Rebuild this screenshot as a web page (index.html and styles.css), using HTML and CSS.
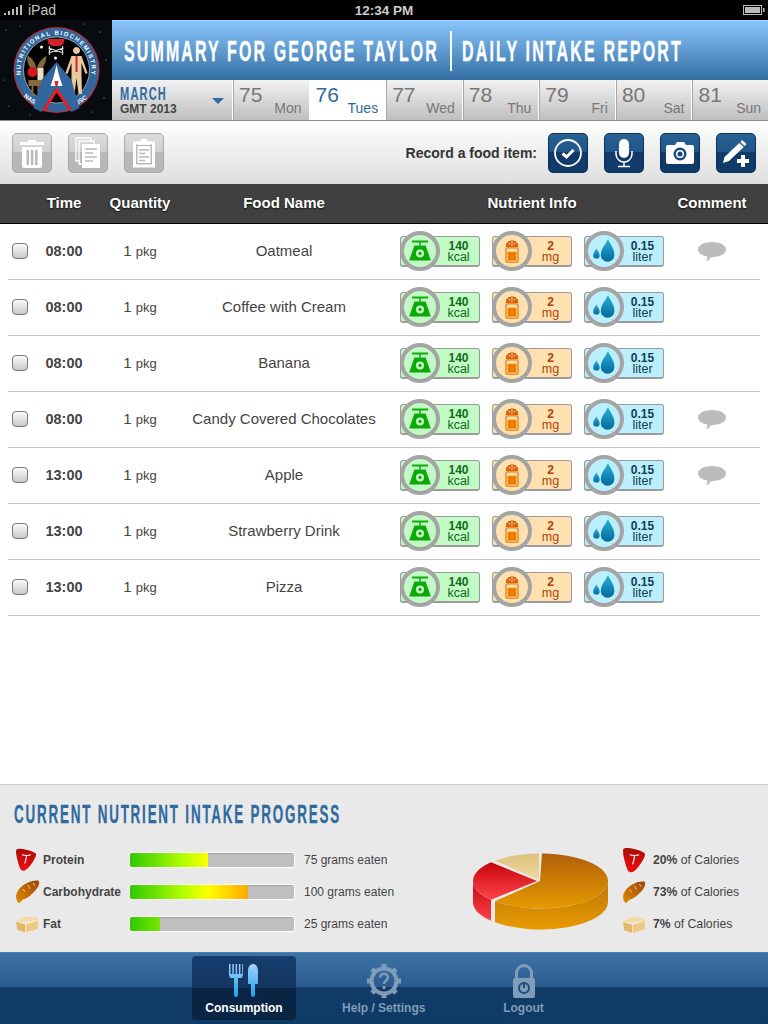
FILE: index.html
```html
<!DOCTYPE html>
<html lang="en">
<head>
<meta charset="utf-8">
<title>Daily Intake Report</title>
<link rel="stylesheet" href="styles.css">
</head>
<body>
<svg class="defs" width="0" height="0" aria-hidden="true">
  <defs>
    <linearGradient id="gMeat" x1="0" y1="0" x2="0" y2="1"><stop offset="0" stop-color="#a80c05"/><stop offset="1" stop-color="#f50a12"/></linearGradient>
    <linearGradient id="gBread" x1="1" y1="0" x2="0" y2="1"><stop offset="0" stop-color="#9b4707"/><stop offset="1" stop-color="#e08a05"/></linearGradient>
    <linearGradient id="gDrop" x1="0" y1="0" x2="0" y2="1"><stop offset="0" stop-color="#2bb0dc"/><stop offset="1" stop-color="#04699c"/></linearGradient>
    <linearGradient id="gPieO" x1="0" y1="0" x2="0" y2="1"><stop offset="0" stop-color="#b05f0a"/><stop offset="1" stop-color="#e69a00"/></linearGradient>
    <linearGradient id="gPieOS" x1="0" y1="0" x2="0" y2="1"><stop offset="0" stop-color="#bf7408"/><stop offset="1" stop-color="#e79c00"/></linearGradient>
    <linearGradient id="gPieR" x1="0" y1="0" x2="0" y2="1"><stop offset="0" stop-color="#c9040c"/><stop offset="1" stop-color="#fb444a"/></linearGradient>
    <linearGradient id="gPieC" x1="0" y1="0" x2="0" y2="1"><stop offset="0" stop-color="#e0c07c"/><stop offset="1" stop-color="#efd9a2"/></linearGradient>
    <linearGradient id="gKnife" x1="0" y1="0" x2="0" y2="1"><stop offset="0" stop-color="#a6d2fb"/><stop offset="1" stop-color="#18a3ea"/></linearGradient>

    <symbol id="i-scale" viewBox="0 0 40 40">
      <path fill="#0aa90a" d="M10 7h20v2.500h-9v3.500h-2V9.500h-9z"/>
      <path fill="#0aa90a" d="M13 13h14l6.500 19H6.500z"/>
      <circle cx="20" cy="23" r="5" fill="#c6f9c6"/><circle cx="20" cy="23" r="2" fill="#0aa90a"/>
    </symbol>
    <symbol id="i-salt" viewBox="0 0 40 40">
      <path fill="#d8650a" d="M12 15c0-6 4-8 8-8s8 2 8 8z"/>
      <g fill="#ffdca6"><circle cx="17" cy="11" r="1"/><circle cx="20" cy="9.500" r="1"/><circle cx="23" cy="11" r="1"/><circle cx="20" cy="12.500" r="1"/></g>
      <rect x="12.500" y="16" width="15" height="18" rx="1.500" fill="none" stroke="#e9780a" stroke-width="1.600"/>
      <rect x="14.500" y="21" width="11" height="11" fill="#ea7d02"/>
    </symbol>
    <symbol id="i-drops" viewBox="0 0 40 40">
      <path fill="url(#gDrop)" d="M25 5c3 7 8 12 8 20a8.500 8.500 0 0 1-17 0c0-8 6-13 9-20z"/>
      <path fill="url(#gDrop)" d="M10.500 17c1.500 3 4 5 4 8.500a4 4 0 0 1-8 0c0-3.500 2.500-5.500 4-8.500z"/>
    </symbol>
    <symbol id="i-bubble" viewBox="0 0 28 20">
      <path fill="#bbb" d="M14 0c7.700 0 14 3.100 14 7.500S21.700 15 14 15h-.5L8.500 20l.8-5.500C3.800 13.600 0 10.800 0 7.500 0 3.100 6.300 0 14 0z"/>
    </symbol>
    <symbol id="i-meat" viewBox="0 0 24 26">
      <path fill="url(#gMeat)" d="M3 0c6 0 14 2 19 5 1.500 1 1 3 0 5-3 6-7 12-12 15-3 1-5-1-6-4C2 15 0 8 0 3c0-2 1-3 3-3z"/>
      <path fill="none" stroke="#fff" stroke-width="1.200" d="M7 7c3 1 7 1 10 0M12 8c0 3-1 6-2 9"/>
    </symbol>
    <symbol id="i-bread" viewBox="0 0 24 24">
      <path fill="url(#gBread)" d="M23 1c1 4-2 8-6 12-4 4-8 6-11 7-1 1-2 3-3 3-2-1-3-4-3-7C1 10 6 5 11 3c4-2 9-3 12-2z"/>
      <path fill="none" stroke="#f5c98a" stroke-width="1" d="M17 3l2 3M12 5l2 4M7 9l2 3"/>
    </symbol>
    <symbol id="i-butter" viewBox="0 0 24 18">
      <path fill="#f2dba5" d="M0 6l8-5 15 1 0 3-14 2z"/>
      <path fill="#e2b768" d="M0 6l10 3v9L1 15z"/>
      <path fill="#edc985" d="M10 9l13-4v9l-13 4z"/>
      <path fill="none" stroke="#fff3d4" stroke-width=".7" d="M0 6l10 3 13-4M10 9v9"/>
    </symbol>
  </defs>
</svg>

<div class="status">
  <div class="status-left">
    <svg class="signal" width="20" height="11" viewBox="0 0 20 11"><path fill="#bbb" d="M1 8h2v2H1zM5 6h2v4H5zM9 4h2v6H9zM13 2h2v8h-2zM17 0h2v10h-2z"/></svg>
    <span>iPad</span>
  </div>
  <div class="status-time">12:34 PM</div>
  <svg class="battery" width="22" height="10" viewBox="0 0 22 10"><rect x=".5" y=".5" width="18" height="9" fill="none" stroke="#bbb"/><rect x="2" y="2" width="15" height="6" fill="#bbb"/><rect x="20" y="3" width="1.500" height="4" fill="#bbb"/></svg>
</div>

<header class="header">
  <svg class="logo" width="112" height="100" viewBox="0 0 112 100">
    <defs><path id="ringTop" d="M21.300 52.900A35.500 35.500 0 1 1 91.700 52.900"/></defs>
    <rect width="112" height="100" fill="#080c10"/>
    <g fill="#9aa"><circle cx="6" cy="10" r=".6"/><circle cx="20" cy="6" r=".5"/><circle cx="100" cy="12" r=".6"/><circle cx="106" cy="40" r=".6"/><circle cx="4" cy="60" r=".5"/><circle cx="9" cy="86" r=".6"/><circle cx="104" cy="78" r=".6"/><circle cx="92" cy="92" r=".5"/><circle cx="30" cy="95" r=".5"/><circle cx="84" cy="4" r=".5"/></g>
    <g transform="translate(-.5 2)">
      <circle cx="57" cy="48" r="43" fill="#c8262c"/>
      <circle cx="57" cy="48" r="42" fill="#31679d"/>
      <circle cx="57" cy="48" r="33" fill="#020203" stroke="#ddd" stroke-width=".6"/>
      <text class="logo-ring" textLength="120" lengthAdjust="spacing"><textPath href="#ringTop">NUTRITIONAL BIOCHEMISTRY</textPath></text>
      <text class="logo-ring logo-mid" transform="rotate(35 32 78)" x="32" y="80">NASA</text>
      <text class="logo-ring logo-mid" transform="rotate(-35 82 78)" x="82" y="80">JSC</text>
      <path fill="#d3222a" d="M48 17h17l-1 5-3 2h-8l-4-2z"/>
      <path stroke="#ddd" stroke-width="1.200" fill="none" d="M49 26l15 5M49 31l15-5M50 24v9M63 24v9"/>
      <circle cx="42" cy="25" r="1.500" fill="#fff"/><circle cx="56" cy="36" r="1.500" fill="#fff"/>
      <path fill="#e9c9a0" d="M77 32a3.500 3.500 0 1 1 .01 0zM72 34h10l6 17-2 1-4-11v13l.5 18H79l-2-16-2 16h-3.500L72 54V41l-4 11-2-1z"/>
      <path fill="#d3222a" d="M76 34h2v16h-2z"/>
      <path fill="#7f6a3c" d="M28 34c4 1 8 6 9 14l-3 2c-4-4-7-10-6-16zM47 34c0 5-2 10-7 16l-3-3c2-6 5-11 10-13z"/>
      <circle cx="33" cy="50" r="5" fill="#d7141a"/>
      <path fill="#e8e0c6" d="M38 46h6v14h-6z"/>
      <path fill="#8a6a38" d="M29 58h14v6H29zM32 64h2v10h-2zM38 64h2v8h-2z"/>
      <path fill="#31679d" d="M57 40l15 18 8 28-8 4-15-24-15 24-8-4 8-28z"/>
      <path fill="none" stroke="#f01a1f" stroke-width="3" d="M44 89l13-21 14 20"/>
      <path fill="#fff" d="M57 43l3 12 3 9H51l3-9z"/>
      <path fill="#e61d24" d="M55 59h4l-1 5h-2z"/>
    </g>
  </svg>
  <div class="header-main">
    <div class="titlebar">
      <h1 class="title-wrap"><svg class="title-svg" width="315" height="30"><text class="title-text" y="25" textLength="315" lengthAdjust="spacingAndGlyphs">SUMMARY FOR GEORGE TAYLOR</text></svg></h1>
      <span class="title-sep"></span>
      <h1 class="title-wrap"><svg class="title-svg" width="221" height="30"><text class="title-text" y="25" textLength="221" lengthAdjust="spacingAndGlyphs">DAILY INTAKE REPORT</text></svg></h1>
    </div>
    <nav class="days">
      <div class="month">
        <div class="month-text">
          <svg class="month-svg" width="47" height="17"><text class="month-name" y="15" textLength="47" lengthAdjust="spacingAndGlyphs">MARCH</text></svg>
          <div class="month-year">GMT 2013</div>
        </div>
        <span class="month-caret"></span>
      </div>
      <div class="day"><span class="day-num">75</span><span class="day-name">Mon</span></div>
      <div class="day day-active"><span class="day-num">76</span><span class="day-name">Tues</span></div>
      <div class="day"><span class="day-num">77</span><span class="day-name">Wed</span></div>
      <div class="day"><span class="day-num">78</span><span class="day-name">Thu</span></div>
      <div class="day"><span class="day-num">79</span><span class="day-name">Fri</span></div>
      <div class="day"><span class="day-num">80</span><span class="day-name">Sat</span></div>
      <div class="day"><span class="day-num">81</span><span class="day-name">Sun</span></div>
    </nav>
  </div>
</header>

<div class="toolbar">
  <div class="tool-group">
    <button class="tool tool-gray"><svg width="26" height="30" viewBox="0 0 26 30"><path fill="#fff" d="M9 2h8v2h8v3H1V4h8zM3 9h20v19a2 2 0 0 1-2 2H5a2 2 0 0 1-2-2z"/><path fill="#b9b9b9" d="M7.500 12h2.500v15H7.500zM11.800 12h2.500v15h-2.500zM16 12h2.500v15H16z"/></svg></button>
    <button class="tool tool-gray"><svg width="26" height="32" viewBox="0 0 26 32"><path fill="none" stroke="#fff" stroke-width="1.300" d="M1 1h15v4M1 1v23h4"/><path fill="none" stroke="#fff" stroke-width="1.300" d="M4 4h15v3M4 4v23h3"/><rect x="7" y="7" width="18" height="24" fill="#fff"/><path stroke="#b9b9b9" stroke-width="1.600" d="M10 12h12M10 16h8M10 20h12M10 24h8"/></svg></button>
    <button class="tool tool-gray"><svg width="24" height="30" viewBox="0 0 24 30"><rect x="1.500" y="4" width="21" height="25" fill="#fff" stroke="#fff"/><rect x="4" y="6.500" width="16" height="20" fill="#b9b9b9"/><rect x="5.500" y="8" width="13" height="17" fill="#fff"/><path fill="#fff" d="M9 1h6v2h3v4H6V3h3z"/><path stroke="#b9b9b9" stroke-width="1.500" d="M7 12h10M7 15.500h6M7 19h10M7 22.500h6"/></svg></button>
  </div>
  <div class="tool-group">
    <span class="tool-label">Record a food item:</span>
    <button class="tool tool-blue"><svg width="30" height="30" viewBox="0 0 30 30"><circle cx="15" cy="15" r="13" fill="none" stroke="#fff" stroke-width="1.800"/><path fill="none" stroke="#fff" stroke-width="3" d="M9.500 15.500l4 3.500 7-7"/></svg></button>
    <button class="tool tool-blue"><svg width="20" height="30" viewBox="0 0 20 30"><rect x="5" y="1" width="10" height="19" rx="5" fill="#fff"/><path fill="none" stroke="#fff" stroke-width="1.500" d="M2 13v3a8 8 0 0 0 16 0v-3M10 24v4M4 28.500h12"/></svg></button>
    <button class="tool tool-blue"><svg width="28" height="22" viewBox="0 0 28 22"><path fill="#fff" d="M9 3l2-3h7l2 3h6a2 2 0 0 1 2 2v15a2 2 0 0 1-2 2H2a2 2 0 0 1-2-2V5a2 2 0 0 1 2-2z"/><circle cx="14" cy="12" r="6.500" fill="#1b4a7c"/><circle cx="14" cy="12" r="4" fill="#fff"/><circle cx="14" cy="12" r="2.500" fill="#1b4a7c"/></svg></button>
    <button class="tool tool-blue"><svg width="30" height="28" viewBox="0 0 30 28"><path fill="#fff" d="M21 1l4.500 4L23.800 7l-4.500-4zM18.300 4l4.500 4L8 22l-6 2 1.500-6z"/><path fill="#fff" d="M20 16h4v4h4v4h-4v4h-4v-4h-4v-4h4z"/></svg></button>
  </div>
</div>

<div class="thead">
  <div class="c-check"></div>
  <div class="c-time">Time</div>
  <div class="c-qty">Quantity</div>
  <div class="c-food">Food Name</div>
  <div class="c-info">Nutrient Info</div>
  <div class="c-comment">Comment</div>
</div>

<main class="rows">
  <div class="row">
    <div class="c-check"><span class="checkbox"></span></div>
    <div class="c-time">08:00</div>
    <div class="c-qty">1 <small>pkg</small></div>
    <div class="c-food">Oatmeal</div>
    <div class="c-info c-pills">
      <div class="pill pill-green"><span class="pill-icon"><svg width="34" height="34"><use href="#i-scale"/></svg></span><span class="pill-text"><b>140</b>kcal</span></div>
      <div class="pill pill-orange"><span class="pill-icon"><svg width="34" height="34"><use href="#i-salt"/></svg></span><span class="pill-text"><b>2</b>mg</span></div>
      <div class="pill pill-blue"><span class="pill-icon"><svg width="34" height="34"><use href="#i-drops"/></svg></span><span class="pill-text"><b>0.15</b>liter</span></div>
    </div>
    <div class="c-comment"><svg width="28" height="20"><use href="#i-bubble"/></svg></div>
  </div>
  <div class="row">
    <div class="c-check"><span class="checkbox"></span></div>
    <div class="c-time">08:00</div>
    <div class="c-qty">1 <small>pkg</small></div>
    <div class="c-food">Coffee with Cream</div>
    <div class="c-info c-pills">
      <div class="pill pill-green"><span class="pill-icon"><svg width="34" height="34"><use href="#i-scale"/></svg></span><span class="pill-text"><b>140</b>kcal</span></div>
      <div class="pill pill-orange"><span class="pill-icon"><svg width="34" height="34"><use href="#i-salt"/></svg></span><span class="pill-text"><b>2</b>mg</span></div>
      <div class="pill pill-blue"><span class="pill-icon"><svg width="34" height="34"><use href="#i-drops"/></svg></span><span class="pill-text"><b>0.15</b>liter</span></div>
    </div>
    <div class="c-comment"></div>
  </div>
  <div class="row">
    <div class="c-check"><span class="checkbox"></span></div>
    <div class="c-time">08:00</div>
    <div class="c-qty">1 <small>pkg</small></div>
    <div class="c-food">Banana</div>
    <div class="c-info c-pills">
      <div class="pill pill-green"><span class="pill-icon"><svg width="34" height="34"><use href="#i-scale"/></svg></span><span class="pill-text"><b>140</b>kcal</span></div>
      <div class="pill pill-orange"><span class="pill-icon"><svg width="34" height="34"><use href="#i-salt"/></svg></span><span class="pill-text"><b>2</b>mg</span></div>
      <div class="pill pill-blue"><span class="pill-icon"><svg width="34" height="34"><use href="#i-drops"/></svg></span><span class="pill-text"><b>0.15</b>liter</span></div>
    </div>
    <div class="c-comment"></div>
  </div>
  <div class="row">
    <div class="c-check"><span class="checkbox"></span></div>
    <div class="c-time">08:00</div>
    <div class="c-qty">1 <small>pkg</small></div>
    <div class="c-food">Candy Covered Chocolates</div>
    <div class="c-info c-pills">
      <div class="pill pill-green"><span class="pill-icon"><svg width="34" height="34"><use href="#i-scale"/></svg></span><span class="pill-text"><b>140</b>kcal</span></div>
      <div class="pill pill-orange"><span class="pill-icon"><svg width="34" height="34"><use href="#i-salt"/></svg></span><span class="pill-text"><b>2</b>mg</span></div>
      <div class="pill pill-blue"><span class="pill-icon"><svg width="34" height="34"><use href="#i-drops"/></svg></span><span class="pill-text"><b>0.15</b>liter</span></div>
    </div>
    <div class="c-comment"><svg width="28" height="20"><use href="#i-bubble"/></svg></div>
  </div>
  <div class="row">
    <div class="c-check"><span class="checkbox"></span></div>
    <div class="c-time">13:00</div>
    <div class="c-qty">1 <small>pkg</small></div>
    <div class="c-food">Apple</div>
    <div class="c-info c-pills">
      <div class="pill pill-green"><span class="pill-icon"><svg width="34" height="34"><use href="#i-scale"/></svg></span><span class="pill-text"><b>140</b>kcal</span></div>
      <div class="pill pill-orange"><span class="pill-icon"><svg width="34" height="34"><use href="#i-salt"/></svg></span><span class="pill-text"><b>2</b>mg</span></div>
      <div class="pill pill-blue"><span class="pill-icon"><svg width="34" height="34"><use href="#i-drops"/></svg></span><span class="pill-text"><b>0.15</b>liter</span></div>
    </div>
    <div class="c-comment"><svg width="28" height="20"><use href="#i-bubble"/></svg></div>
  </div>
  <div class="row">
    <div class="c-check"><span class="checkbox"></span></div>
    <div class="c-time">13:00</div>
    <div class="c-qty">1 <small>pkg</small></div>
    <div class="c-food">Strawberry Drink</div>
    <div class="c-info c-pills">
      <div class="pill pill-green"><span class="pill-icon"><svg width="34" height="34"><use href="#i-scale"/></svg></span><span class="pill-text"><b>140</b>kcal</span></div>
      <div class="pill pill-orange"><span class="pill-icon"><svg width="34" height="34"><use href="#i-salt"/></svg></span><span class="pill-text"><b>2</b>mg</span></div>
      <div class="pill pill-blue"><span class="pill-icon"><svg width="34" height="34"><use href="#i-drops"/></svg></span><span class="pill-text"><b>0.15</b>liter</span></div>
    </div>
    <div class="c-comment"></div>
  </div>
  <div class="row">
    <div class="c-check"><span class="checkbox"></span></div>
    <div class="c-time">13:00</div>
    <div class="c-qty">1 <small>pkg</small></div>
    <div class="c-food">Pizza</div>
    <div class="c-info c-pills">
      <div class="pill pill-green"><span class="pill-icon"><svg width="34" height="34"><use href="#i-scale"/></svg></span><span class="pill-text"><b>140</b>kcal</span></div>
      <div class="pill pill-orange"><span class="pill-icon"><svg width="34" height="34"><use href="#i-salt"/></svg></span><span class="pill-text"><b>2</b>mg</span></div>
      <div class="pill pill-blue"><span class="pill-icon"><svg width="34" height="34"><use href="#i-drops"/></svg></span><span class="pill-text"><b>0.15</b>liter</span></div>
    </div>
    <div class="c-comment"></div>
  </div>
</main>

<section class="progress">
  <h2 class="progress-title"><svg class="progress-svg" width="327" height="26"><text class="progress-text" y="22.500" textLength="327" lengthAdjust="spacingAndGlyphs">CURRENT NUTRIENT INTAKE PROGRESS</text></svg></h2>
  <div class="progress-body">
    <div class="bars">
      <div class="bar-row">
        <svg class="food-icon" width="21" height="25"><use href="#i-meat"/></svg>
        <span class="bar-label">Protein</span>
        <span class="bar"><span class="bar-fill" style="width:78px"></span></span>
        <span class="bar-text">75 grams eaten</span>
      </div>
      <div class="bar-row">
        <svg class="food-icon" width="24" height="24"><use href="#i-bread"/></svg>
        <span class="bar-label">Carbohydrate</span>
        <span class="bar"><span class="bar-fill" style="width:118px"></span></span>
        <span class="bar-text">100 grams eaten</span>
      </div>
      <div class="bar-row">
        <svg class="food-icon" width="23" height="17"><use href="#i-butter"/></svg>
        <span class="bar-label">Fat</span>
        <span class="bar"><span class="bar-fill" style="width:30px"></span></span>
        <span class="bar-text">25 grams eaten</span>
      </div>
    </div>
    <svg class="pie" width="136" height="78" viewBox="473 851 136 78">
      <path fill="url(#gPieR)" d="M473 879A67.500 27.500 0 0 0 491 897.700V918.700A67.500 27.500 0 0 1 473 900z"/>
      <path fill="url(#gPieOS)" d="M495 899.300A67.500 27.500 0 0 0 608 879V900A67.500 27.500 0 0 1 495 920.300z"/>
      <path fill="url(#gPieO)" d="M542 851.500A67.500 27.500 0 1 1 495 899.300L540 879z"/>
      <path fill="url(#gPieR)" d="M491 860.300L537 879 491 897.700A67.500 27.500 0 0 1 491 860.300z"/>
      <path fill="url(#gPieC)" d="M495 858.700A67.500 27.500 0 0 1 539 851.500V878z"/>
    </svg>
    <div class="legend">
      <div class="legend-row"><svg class="legend-icon" width="23" height="25"><use href="#i-meat"/></svg><span><b>20%</b> of Calories</span></div>
      <div class="legend-row"><svg class="legend-icon" width="23" height="23"><use href="#i-bread"/></svg><span><b>73%</b> of Calories</span></div>
      <div class="legend-row"><svg class="legend-icon" width="23" height="17"><use href="#i-butter"/></svg><span><b>7%</b> of Calories</span></div>
    </div>
  </div>
</section>

<footer class="tabbar">
  <div class="tab tab-active">
    <svg width="30" height="34" viewBox="0 0 30 34"><path fill="url(#gKnife)" d="M0 0h1.500v10h1.800V0h1.500v10h1.800V0h1.500v10h1.800V0h1.500v10h1.800V0H14v11l-1 3H9v17a2 2 0 0 1-2 2 2 2 0 0 1-2-2V14H1l-1-3z"/><path fill="url(#gKnife)" d="M19 7c0-4 2-7 5-7s5 3 5 7v13h-3v11a2 2 0 0 1-4 0V20h-3z"/></svg>
    <span>Consumption</span>
  </div>
  <div class="tab">
    <svg width="34" height="34" viewBox="0 0 34 34"><circle cx="17" cy="17" r="12.500" fill="none" stroke="#7f9cb9" stroke-width="4"/><g stroke="#7f9cb9" stroke-width="5"><path d="M17 0v5M17 29v5M0 17h5M29 17h5M5 5l3.500 3.500M25.500 25.500L29 29M29 5l-3.500 3.500M8.500 25.500L5 29"/></g><path fill="none" stroke="#7f9cb9" stroke-width="2.500" d="M13 13.500c0-5 8-5 8 0 0 3-4 3-4 6.500"/><circle cx="17" cy="23.500" r="1.700" fill="#7f9cb9"/></svg>
    <span>Help / Settings</span>
  </div>
  <div class="tab">
    <svg width="24" height="34" viewBox="0 0 24 34"><path fill="none" stroke="#7f9cb9" stroke-width="3" d="M4.500 14V9a7.500 7.500 0 0 1 15 0v5"/><rect x="1" y="14" width="22" height="20" rx="2" fill="#7f9cb9"/><circle cx="12" cy="24" r="5" fill="none" stroke="#1f4c7a" stroke-width="2"/><path stroke="#1f4c7a" stroke-width="2" d="M12 19v5"/></svg>
    <span>Logout</span>
  </div>
</footer>
</body>
</html>
```

FILE: styles.css
```css
* { box-sizing: border-box; }
html, body { margin: 0; padding: 0; }
body {
  width: 768px;
  height: 1024px;
  overflow: hidden;
  display: flex;
  flex-direction: column;
  background: #fff;
  font-family: "Liberation Sans", Arial, sans-serif;
  color: #444;
}
.defs { display: block; height: 0; }

/* status bar */
.status {
  height: 20px;
  flex: none;
  background: #000;
  color: #c4c4c4;
  display: grid;
  grid-template-columns: 1fr auto 1fr;
  align-items: center;
  padding: 0 3px;
  font-size: 14px;
}
.status-left { display: flex; align-items: center; gap: 5px; }
.signal { margin-top: 1px; }
.status-time { font-weight: bold; font-size: 13.5px; color: #ccc; }
.battery { justify-self: end; }

/* header */
.header {
  height: 101px;
  flex: none;
  display: flex;
  border-bottom: 1px solid #8e8e8e;
}
.logo { display: block; flex: none; }
.logo-ring {
  font-family: "Liberation Sans", sans-serif;
  font-size: 6px;
  font-weight: bold;
  fill: #fff;
}
.logo-mid { text-anchor: middle; }
.header-main { flex: 1; min-width: 0; display: flex; flex-direction: column; }
.titlebar {
  height: 60px;
  display: flex;
  align-items: center;
  padding-left: 12px;
  background: linear-gradient(#8ac6fb, #346fa4);
  border-top: 1px solid #a6d5fd;
}
.title-wrap { margin: 0; line-height: 0; }
.title-svg { display: block; overflow: visible; }
.title-text {
  font-family: "Liberation Sans", sans-serif;
  font-weight: bold;
  font-size: 30px;
  letter-spacing: 4px;
  fill: #fff;
  stroke: #fff;
  stroke-width: .35px;
}
.title-sep { width: 2px; height: 40px; background: #fff; margin: 0 10px 0 11px; }
.days { height: 40px; display: flex; }
.month {
  width: 120px;
  flex: none;
  display: flex;
  align-items: center;
  justify-content: space-between;
  padding: 0 8px;
  background: linear-gradient(#f2f2f2, #bfbfbf);
}
.month-svg { display: block; overflow: visible; }
.month-name {
  font-family: "Liberation Sans", sans-serif;
  font-weight: bold;
  font-size: 19px;
  letter-spacing: 2px;
  fill: #2f6aa0;
}
.month-year { font-size: 12px; line-height: 14px; font-weight: bold; color: #444; white-space: nowrap; }
.month-caret {
  width: 0; height: 0;
  border-left: 6px solid transparent;
  border-right: 6px solid transparent;
  border-top: 6px solid #2f6aa0;
  margin-top: 2px;
}
.day {
  flex: 1;
  min-width: 0;
  border-left: 1px solid #fff;
  box-shadow: inset 1px 0 0 #a8a8a8;
  background: linear-gradient(#f2f2f2, #bfbfbf);
  display: flex;
  justify-content: space-between;
  padding: 0 7px 0 6px;
  color: #777;
}
.day-num { font-size: 21px; line-height: 29px; }
.day-name { font-size: 14px; line-height: 14px; align-self: flex-end; margin-bottom: 5px; }
.day-active { background: #fff; color: #2f6aa0; box-shadow: none; }

/* toolbar */
.toolbar {
  height: 63px;
  flex: none;
  display: flex;
  align-items: center;
  justify-content: space-between;
  padding: 0 12px;
  background: linear-gradient(#fff, #dedede);
}
.tool-group { display: flex; align-items: center; gap: 16px; }
.tool-label { font-size: 14px; font-weight: bold; color: #333; margin-right: -5px; white-space: nowrap; }
.tool {
  width: 40px;
  height: 40px;
  padding: 0;
  border-radius: 5px;
  display: flex;
  align-items: center;
  justify-content: center;
}
.tool-gray {
  border: 1px solid #a9a9a9;
  background: linear-gradient(#dcdcdc 0, #cfcfcf 48%, #b9b9b9 48%, #b7b7b7 100%);
}
.tool-blue {
  border: 1px solid #0c3058;
  background: linear-gradient(#2a6296 0, #1f5587 48%, #103a67 48%, #103a67 100%);
}

/* table */
.thead, .row {
  display: grid;
  grid-template-columns: 20px 72px 80px 208px 288px 72px;
  align-items: center;
}
.thead {
  height: 40px;
  flex: none;
  padding: 0 20px 2px 8px;
  background: #404040;
  border-bottom: 1px solid #000;
  color: #fff;
  font-weight: bold;
  font-size: 15px;
  text-shadow: 0 1px 2px rgba(0,0,0,.8);
}
.c-time, .c-qty, .c-food, .c-info, .c-comment { text-align: center; }
.rows { flex: 1; min-height: 0; padding: 0 8px; }
.row {
  height: 56px;
  padding: 0 12px 2px 0;
  border-bottom: 1px solid #c4c4c4;
}
.checkbox {
  display: block;
  width: 16px;
  height: 16px;
  margin-left: 4px;
  border: 1px solid #777;
  border-radius: 4px;
  background: linear-gradient(#fafafa, #c9c9c9);
}
.row .c-time { font-size: 14.500px; font-weight: bold; color: #444; }
.row .c-qty { font-size: 15px; color: #444; }
.row .c-qty small { font-size: 13px; }
.row .c-food { font-size: 15px; color: #444; white-space: nowrap; }
.c-pills { display: flex; gap: 12px; padding-left: 12px; margin-top: 2px; }
.c-comment svg { display: block; margin: 2px auto 0; }
.pill {
  width: 80px;
  height: 31px;
  position: relative;
  border: 1px solid #9c9c9c;
  border-bottom-width: 2px;
  border-radius: 3px;
  padding-left: 37px;
  display: flex;
  align-items: center;
}
.pill-icon {
  position: absolute;
  left: -1px;
  top: -6px;
  width: 40px;
  height: 40px;
  border: 4px solid #a4a4a4;
  border-radius: 50%;
  display: flex;
  align-items: center;
  justify-content: center;
}
.pill-icon svg { flex: none; width: 32px; height: 32px; }
.pill-text {
  flex: 1;
  text-align: center;
  font-size: 12.500px;
  line-height: 11px;
  display: flex;
  flex-direction: column;
  align-items: center;
  margin-top: 1px;
}
.pill-text b { font-size: 12px; }
.pill-green, .pill-green .pill-icon { background: #c2fac6; }
.pill-green .pill-text { color: #0b6b16; }
.pill-orange, .pill-orange .pill-icon { background: #ffe0b0; }
.pill-orange .pill-text { color: #a9450c; }
.pill-blue, .pill-blue .pill-icon { background: #bceffd; }
.pill-blue .pill-text { color: #0c3d55; }

/* progress */
.progress {
  height: 168px;
  flex: none;
  background: #e9e9e9;
  border-top: 1px solid #c9c9c9;
  padding: 15px 14px 0;
}
.progress-title { margin: 0; line-height: 0; }
.progress-svg { display: block; overflow: visible; }
.progress-text {
  font-family: "Liberation Sans", sans-serif;
  font-weight: bold;
  font-size: 26px;
  letter-spacing: 3.500px;
  fill: #2f6aa0;
  stroke: #2f6aa0;
  stroke-width: .3px;
}
.progress-body { display: flex; align-items: center; margin-top: 21px; }
.bars { width: 459px; flex: none; display: flex; flex-direction: column; gap: 6px; }
.bar-row { height: 26px; position: relative; display: flex; align-items: center; padding-left: 29px; }
.food-icon { position: absolute; left: 2px; top: 50%; transform: translateY(-50%); }
.bar-label { width: 86px; flex: none; font-size: 12px; font-weight: bold; color: #444; }
.bar {
  width: 166px;
  flex: none;
  height: 16px;
  background: #bfbfbf;
  border: 1px solid #fff;
  border-radius: 3px;
  overflow: hidden;
  display: block;
  box-shadow: inset 0 1px 1px rgba(0,0,0,.15);
}
.bar-fill {
  display: block;
  height: 100%;
  background: linear-gradient(90deg, #2fc800 0, #b6ff00 46%, #ffff00 66%, #ffa800 100%) no-repeat 0 0 / 118px 100%;
}
.bar-text { margin-left: 9px; font-size: 12px; color: #444; white-space: nowrap; }
.pie { display: block; flex: none; margin-top: -1px; }
.legend { margin-left: 14px; display: flex; flex-direction: column; gap: 6px; }
.legend-row { height: 26px; display: flex; align-items: center; font-size: 12.200px; color: #444; white-space: nowrap; }
.legend-icon { width: 23px; margin-right: 7px; flex: none; }

/* tab bar */
.tabbar {
  height: 72px;
  flex: none;
  display: flex;
  gap: 35.750px;
  padding: 3px 0 3px 192px;
  background: linear-gradient(#3e73a6 0, #2a5b8f 48%, #123c68 48%, #103a66 100%);
  border-top: 1px solid #4d81b3;
}
.tab {
  width: 104px;
  height: 64px;
  border-radius: 4px;
  display: flex;
  flex-direction: column;
  align-items: center;
  padding-top: 8px;
  gap: 3px;
  font-size: 12px;
  font-weight: bold;
  color: #7f9cb9;
}
.tab-active {
  color: #fff;
  background: linear-gradient(#173e70 0, #14355f 50%, #0a2444 50%, #0a2444 100%);
}
```
